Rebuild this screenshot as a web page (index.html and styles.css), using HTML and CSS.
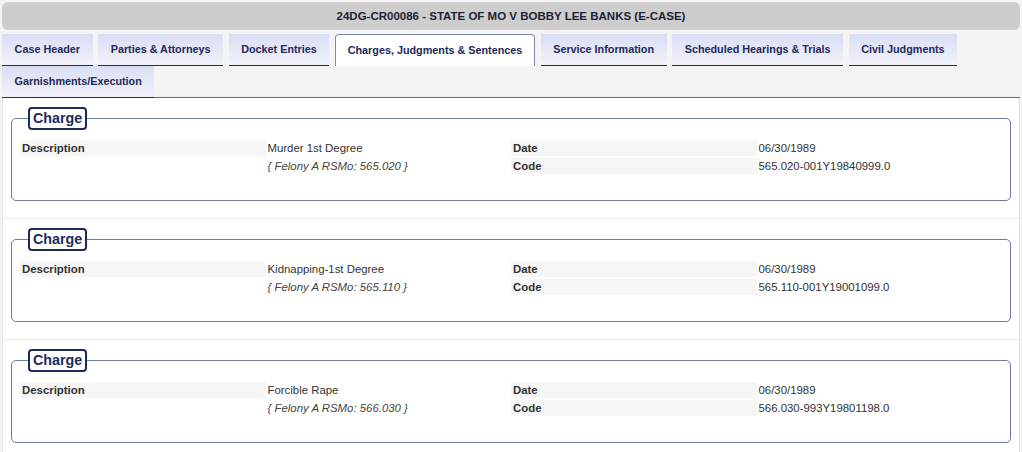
FILE: index.html
```html
<!DOCTYPE html>
<html lang="en">
<head>
<meta charset="utf-8">
<title>24DG-CR00086 - STATE OF MO V BOBBY LEE BANKS (E-CASE)</title>
<link rel="stylesheet" href="styles.css">
</head>
<body>
<div class="page">
  <div class="case-title">24DG-CR00086 - STATE OF MO V BOBBY LEE BANKS (E-CASE)</div>
  <nav class="tabs">
    <a class="tab">Case Header</a>
    <a class="tab">Parties &amp; Attorneys</a>
    <a class="tab">Docket Entries</a>
    <a class="tab tab-active">Charges, Judgments &amp; Sentences</a>
    <a class="tab">Service Information</a>
    <a class="tab">Scheduled Hearings &amp; Trials</a>
    <a class="tab">Civil Judgments</a>
    <a class="tab">Garnishments/Execution</a>
  </nav>
  <div class="panel">
    <section class="charge">
      <fieldset class="charge-box">
        <legend class="charge-legend">Charge</legend>
        <table class="charge-table">
          <tr><th class="label">Description</th><td class="value">Murder 1st Degree</td><th class="label">Date</th><td class="value">06/30/1989</td></tr>
          <tr><td class="blank"></td><td class="value statute">{ Felony A RSMo: 565.020 }</td><th class="label">Code</th><td class="value">565.020-001Y19840999.0</td></tr>
        </table>
      </fieldset>
    </section>
    <section class="charge">
      <fieldset class="charge-box">
        <legend class="charge-legend">Charge</legend>
        <table class="charge-table">
          <tr><th class="label">Description</th><td class="value">Kidnapping-1st Degree</td><th class="label">Date</th><td class="value">06/30/1989</td></tr>
          <tr><td class="blank"></td><td class="value statute">{ Felony A RSMo: 565.110 }</td><th class="label">Code</th><td class="value">565.110-001Y19001099.0</td></tr>
        </table>
      </fieldset>
    </section>
    <section class="charge">
      <fieldset class="charge-box">
        <legend class="charge-legend">Charge</legend>
        <table class="charge-table">
          <tr><th class="label">Description</th><td class="value">Forcible Rape</td><th class="label">Date</th><td class="value">06/30/1989</td></tr>
          <tr><td class="blank"></td><td class="value statute">{ Felony A RSMo: 566.030 }</td><th class="label">Code</th><td class="value">566.030-993Y19801198.0</td></tr>
        </table>
      </fieldset>
    </section>
  </div>
</div>
</body>
</html>
```

FILE: styles.css
```css
* { box-sizing: border-box; }

html, body {
  margin: 0;
  padding: 0;
  background: #ffffff;
}

body {
  font-family: "Liberation Sans", Arial, Helvetica, sans-serif;
  color: #333333;
}

.page {
  width: 1022px;
  padding: 2px 2px 0 2px;
  background: #f4f4f4;
}

.case-title {
  height: 28px;
  line-height: 28px;
  background: #cdcdcd;
  border-radius: 6px;
  text-align: center;
  font-size: 11.5px;
  font-weight: bold;
  color: #1c2236;
}

.tabs {
  display: flex;
  flex-wrap: wrap;
  column-gap: 5.5px;
  margin-top: 4px;
  border-bottom: 1px solid #5d6b92;
}

.tab {
  display: block;
  height: 32px;
  line-height: 31px;
  padding: 0 12.6px;
  font-size: 10.8px;
  font-weight: bold;
  color: #1d2a5a;
  background: linear-gradient(#dadef4, #f1f2f9);
  border-bottom: 1px solid #2e2e2e;
  white-space: nowrap;
  cursor: pointer;
}

.tabs .tab:last-child {
  margin-bottom: -1px;
}

.tab-active {
  background: #ffffff;
  border: 1px solid #7c8ba8;
  border-bottom: none;
  border-radius: 4px 4px 0 0;
  line-height: 30px;
  padding: 0 11.8px;
}

.panel {
  background: #ffffff;
  border-left: 1px solid #e6e6e6;
  border-right: 1px solid #e0e0e0;
}

.charge {
  padding: 9px 8px 17px 8px;
  border-bottom: 1px solid #ececec;
}

.charge-box {
  margin: 0;
  padding: 8px 8px 24px 8px;
  border: 1px solid #6e7b9e;
  border-radius: 5px;
}

.charge-legend {
  margin-left: 8px;
  padding: 1px 3px;
  line-height: 17px;
  font-size: 14.3px;
  font-weight: bold;
  color: #1c2a5c;
  background: #ffffff;
  border: 2px solid #1c2a5c;
  border-radius: 4px;
}

.charge-table {
  width: 100%;
  table-layout: fixed;
  border-collapse: separate;
  border-spacing: 0 2px;
  font-size: 11.4px;
}

.charge-table th,
.charge-table td {
  height: 16px;
  line-height: 16px;
  padding: 0 2px;
  text-align: left;
  vertical-align: middle;
  white-space: nowrap;
}

.label {
  font-weight: bold;
  color: #333333;
  background: #f6f6f6;
}

.value {
  font-weight: normal;
  color: #333333;
  padding-left: 3px;
}

.statute {
  font-style: italic;
  color: #444444;
}
```
